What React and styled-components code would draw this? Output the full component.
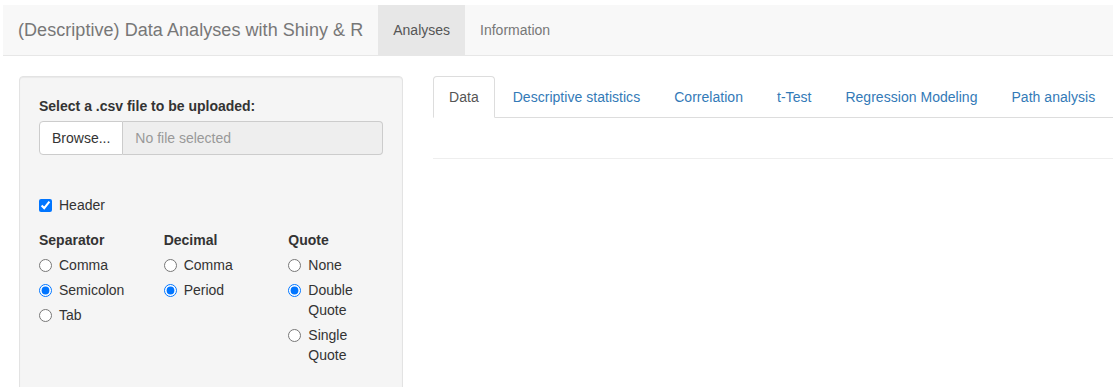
import React from 'react';
import styled, { createGlobalStyle } from 'styled-components';

const GlobalStyle = createGlobalStyle`
  * { box-sizing: border-box; }
  body {
    margin: 0;
    background: #fff;
    font-family: "Liberation Sans", Arial, sans-serif;
    font-size: 14px;
    line-height: 20px;
    color: #333;
  }
`;

const Page = styled.div`
  padding-top: 5px;
  overflow: hidden;
  height: 387px;
`;

const Navbar = styled.nav`
  display: flex;
  height: 51px;
  margin-left: 3px;
  background: #f8f8f8;
  border-bottom: 1px solid #e7e7e7;
`;

const Brand = styled.div`
  padding: 15px;
  font-size: 18px;
  line-height: 20px;
  letter-spacing: 0.05px;
  color: #777;
  white-space: nowrap;
`;

const NavLink = styled.a`
  display: block;
  padding: 15px;
  line-height: 20px;
  color: ${p => (p.$active ? '#555' : '#777')};
  background: ${p => (p.$active ? '#e7e7e7' : 'transparent')};
  text-decoration: none;
`;

const Body = styled.div`
  display: flex;
  gap: 30px;
  padding: 20px 0 0 19px;
`;

const Well = styled.div`
  flex: 0 0 384px;
  min-height: 330px;
  padding: 19px;
  background: #f5f5f5;
  border: 1px solid #e3e3e3;
  border-radius: 4px;
  box-shadow: inset 0 1px 1px rgba(0, 0, 0, 0.05);
`;

const Label = styled.div`
  font-weight: bold;
  margin-bottom: 5px;
`;

const InputGroup = styled.div`
  display: flex;
  height: 34px;
`;

const BrowseButton = styled.span`
  display: flex;
  align-items: center;
  padding: 0 12px;
  background: #fff;
  border: 1px solid #ccc;
  border-radius: 4px 0 0 4px;
  color: #333;
`;

const FileName = styled.span`
  flex: 1;
  display: flex;
  align-items: center;
  padding: 0 12px;
  background: #eee;
  border: 1px solid #ccc;
  border-left: 0;
  border-radius: 0 4px 4px 0;
  color: #999;
`;

const CheckRow = styled.label`
  display: flex;
  align-items: center;
  margin-top: 40px;
  height: 20px;
  input {
    margin: 0 7px 0 0;
    width: 13px;
    height: 13px;
  }
`;

const Options = styled.div`
  display: grid;
  grid-template-columns: repeat(3, 1fr);
  margin: 15px -15px 0;
`;

const OptionColumn = styled.div`
  padding: 0 15px;
`;

const RadioRow = styled.label`
  display: flex;
  align-items: flex-start;
  line-height: 20px;
  & + & {
    margin-top: 5px;
  }
  input {
    flex: 0 0 auto;
    margin: 4px 7px 0 0;
    width: 13px;
    height: 13px;
  }
`;

const Main = styled.div`
  flex: 1;
  min-width: 0;
`;

const Tabs = styled.ul`
  display: flex;
  margin: 0;
  padding: 0;
  list-style: none;
  border-bottom: 1px solid #ddd;
  white-space: nowrap;
`;

const Tab = styled.li`
  margin: 0 2px -1px 0;
  padding: 10px 15px;
  line-height: 20px;
  letter-spacing: 0.03px;
  color: ${p => (p.$active ? '#555' : '#337ab7')};
  background: ${p => (p.$active ? '#fff' : 'transparent')};
  border: 1px solid ${p => (p.$active ? '#ddd' : 'transparent')};
  border-bottom-color: transparent;
  border-radius: 4px 4px 0 0;
`;

const Divider = styled.hr`
  margin: 40px 0 0;
  border: 0;
  border-top: 1px solid #eee;
`;

const groups = [
  { title: 'Separator', name: 'sep', options: ['Comma', 'Semicolon', 'Tab'], checked: 'Semicolon' },
  { title: 'Decimal', name: 'dec', options: ['Comma', 'Period'], checked: 'Period' },
  { title: 'Quote', name: 'quote', options: ['None', 'Double Quote', 'Single Quote'], checked: 'Double Quote' },
];

const tabs = ['Data', 'Descriptive statistics', 'Correlation', 't-Test', 'Regression Modeling', 'Path analysis'];

const App = () => (
  <Page>
    <GlobalStyle />
    <Navbar>
      <Brand>(Descriptive) Data Analyses with Shiny &amp; R</Brand>
      <NavLink $active>Analyses</NavLink>
      <NavLink>Information</NavLink>
    </Navbar>
    <Body>
      <Well>
        <Label>Select a .csv file to be uploaded:</Label>
        <InputGroup>
          <BrowseButton>Browse...</BrowseButton>
          <FileName>No file selected</FileName>
        </InputGroup>
        <CheckRow>
          <input type="checkbox" defaultChecked />
          <span>Header</span>
        </CheckRow>
        <Options>
          {groups.map(g => (
            <OptionColumn key={g.name}>
              <Label>{g.title}</Label>
              {g.options.map(o => (
                <RadioRow key={o}>
                  <input type="radio" name={g.name} defaultChecked={o === g.checked} />
                  <span>{o}</span>
                </RadioRow>
              ))}
            </OptionColumn>
          ))}
        </Options>
      </Well>
      <Main>
        <Tabs>
          {tabs.map((t, i) => (
            <Tab key={t} $active={i === 0}>{t}</Tab>
          ))}
        </Tabs>
        <Divider />
      </Main>
    </Body>
  </Page>
);

export default App;
